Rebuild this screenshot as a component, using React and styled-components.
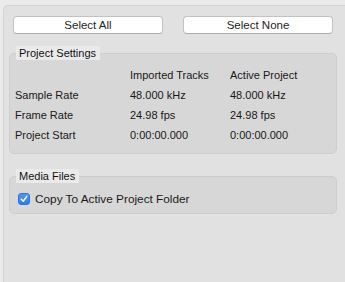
import React from "react";
import styled, { createGlobalStyle } from "styled-components";

const GlobalStyle = createGlobalStyle`
  html, body { margin: 0; padding: 0; background: #ebebeb; height: 100%; }
  body { font-family: "Liberation Sans", Arial, Helvetica, sans-serif; font-size: 11px; color: #151515; }
  #root { height: 100%; }
`;

const Window = styled.div`
  box-sizing: border-box;
  height: 282px;
  padding: 5px 0 0 3px;
  display: flex;
`;

const Panel = styled.div`
  flex: 1;
  display: flex;
  flex-direction: column;
  align-items: stretch;
  background: #e1e1e1;
  border-top: 1px solid #d4d4d4;
  border-left: 1px solid #d4d4d4;
  border-top-left-radius: 5px;
  padding: 10px 8px 0 5px;
`;

const ButtonRow = styled.div`
  display: flex;
  gap: 20px;
  padding-left: 4px;
`;

const PushButton = styled.button`
  box-sizing: border-box;
  width: 150px;
  height: 18px;
  padding: 0;
  background: #ffffff;
  border: 1px solid #c2c2c2;
  border-bottom-color: #acacac;
  border-radius: 4px;
  font-family: "Liberation Sans", Arial, sans-serif;
  font-size: 11.5px;
  color: #1e1e1e;
  line-height: 16px;
  text-align: center;
`;

const Group = styled.section`
  display: flex;
  flex-direction: column;
  margin-top: ${(p) => p.$top}px;
`;

const GroupTitle = styled.div`
  position: relative;
  z-index: 1;
  align-self: flex-start;
  margin-left: 7px;
  height: 14px;
  line-height: 14px;
  padding: 0 4px 0 3px;
  background: #eaeaea;
  color: #111;
  font-size: 11px;
`;

const GroupBox = styled.div`
  margin-top: -7px;
  background: #d7d7d7;
  border: 1px solid #cecece;
  border-radius: 5px;
  padding: ${(p) => p.$pad};
`;

const Table = styled.div`
  display: grid;
  grid-template-columns: 115px 100px 1fr;
  grid-auto-rows: 20px;
  align-items: center;
  color: #181818;
`;

const CheckRow = styled.label`
  display: flex;
  align-items: center;
  gap: 5px;
  height: 14px;
  font-size: 11.8px;
  color: #1a1a1a;
`;

const CheckBox = styled.span`
  box-sizing: border-box;
  width: 12px;
  height: 12px;
  border-radius: 3px;
  background: linear-gradient(#4d99f8, #2b7cf3);
  border: 1px solid #2a73e0;
  display: flex;
  align-items: center;
  justify-content: center;
`;

const rows = [
  ["", "Imported Tracks", "Active Project"],
  ["Sample Rate", "48.000 kHz", "48.000 kHz"],
  ["Frame Rate", "24.98 fps", "24.98 fps"],
  ["Project Start", "0:00:00.000", "0:00:00.000"],
];

export default function App() {
  return (
    <>
      <GlobalStyle />
      <Window>
        <Panel>
          <ButtonRow>
            <PushButton>Select All</PushButton>
            <PushButton>Select None</PushButton>
          </ButtonRow>
          <Group $top={12}>
            <GroupTitle>Project Settings</GroupTitle>
            <GroupBox $pad="11px 5px 8px 5px">
              <Table>
                {rows.flatMap((r, i) =>
                  r.map((c, j) => <span key={`${i}-${j}`}>{c}</span>)
                )}
              </Table>
            </GroupBox>
          </Group>
          <Group $top={15}>
            <GroupTitle>Media Files</GroupTitle>
            <GroupBox $pad="15px 8px 7px 8px">
              <CheckRow>
                <CheckBox>
                  <svg width="8" height="8" viewBox="0 0 8 8">
                    <path d="M1.3 4.3 L3.2 6.2 L6.8 1.4" fill="none" stroke="#fff" strokeWidth="1.5" strokeLinecap="round" strokeLinejoin="round" />
                  </svg>
                </CheckBox>
                Copy To Active Project Folder
              </CheckRow>
            </GroupBox>
          </Group>
        </Panel>
      </Window>
    </>
  );
}
